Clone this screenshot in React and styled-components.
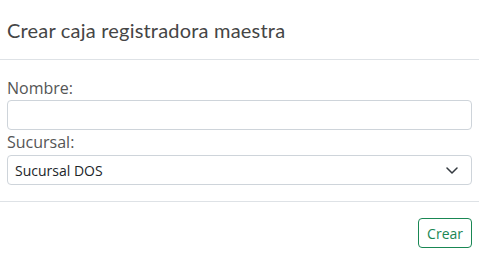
import React from "react";
import styled, { createGlobalStyle } from "styled-components";

const GlobalStyle = createGlobalStyle`
  body {
    margin: 0;
    background: #fff;
    font-family: "Open Sans", "Noto Sans", sans-serif;
    color: #495057;
  }
`;

const Modal = styled.div`
  width: 479px;
  background: #fff;
`;

const Header = styled.div`
  height: 59px;
  padding: 0 7px;
  display: flex;
  align-items: center;
  border-bottom: 1px solid #dee2e6;
`;

const Title = styled.h5`
  margin: 0;
  font-family: "Lato", sans-serif;
  font-size: 20px;
  font-weight: 400;
  color: #454545;
  letter-spacing: 0.2px;
`;

const Body = styled.div`
  padding: 16px 7px 16px;
  border-bottom: 1px solid #dee2e6;
`;

const Label = styled.label`
  display: block;
  font-size: 16px;
  line-height: 24px;
  color: #555;
`;

const Input = styled.input`
  display: block;
  box-sizing: border-box;
  width: 100%;
  height: 30px;
  margin: 0;
  padding: 0 8px;
  border: 1px solid #ced4da;
  border-radius: 4px;
  font-family: inherit;
  font-size: 14px;
  outline: none;
`;

const SelectBox = styled.div`
  position: relative;
  margin-top: 1px;
`;

const Select = styled.select`
  display: block;
  box-sizing: border-box;
  width: 100%;
  height: 30px;
  padding: 0 7px;
  border: 1px solid #ced4da;
  border-radius: 4px;
  background: #fff;
  appearance: none;
  font-family: inherit;
  font-size: 14px;
  color: #212529;
  outline: none;
`;

const Chevron = styled.svg`
  position: absolute;
  right: 14px;
  top: 12px;
  pointer-events: none;
`;

const Footer = styled.div`
  display: flex;
  justify-content: flex-end;
  padding: 16px 7px 12px;
`;

const Button = styled.button`
  height: 30px;
  padding: 0 8px;
  background: #fff;
  border: 1px solid #198754;
  border-radius: 4px;
  color: #198754;
  font-family: inherit;
  font-size: 14px;
  cursor: pointer;
`;

const App = () => {
  return (
    <>
      <GlobalStyle />
      <Modal>
        <Header>
          <Title>Crear caja registradora maestra</Title>
        </Header>
        <Body>
          <Label>Nombre:</Label>
          <Input type="text" />
          <Label>Sucursal:</Label>
          <SelectBox>
            <Select defaultValue="2">
              <option value="1">Sucursal UNO</option>
              <option value="2">Sucursal DOS</option>
            </Select>
            <Chevron width="12" height="7" viewBox="0 0 12 7">
              <path
                d="M1 1l5 5 5-5"
                fill="none"
                stroke="#343a40"
                strokeWidth="1.5"
                strokeLinecap="round"
                strokeLinejoin="round"
              />
            </Chevron>
          </SelectBox>
        </Body>
        <Footer>
          <Button>Crear</Button>
        </Footer>
      </Modal>
    </>
  );
};

export default App;
